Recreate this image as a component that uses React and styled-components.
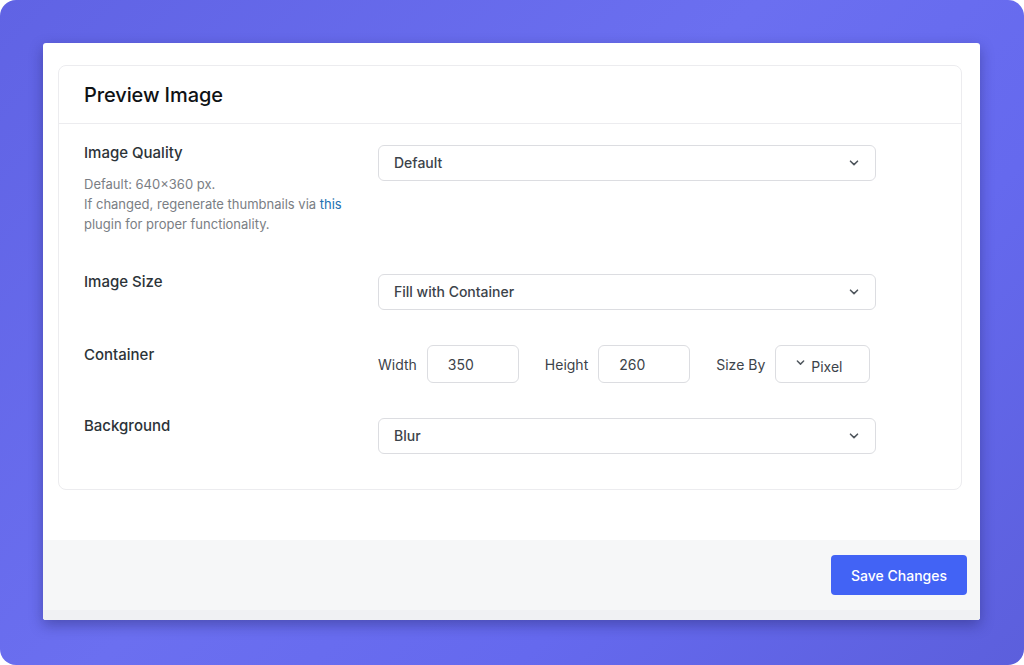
import React from 'react';
import styled, { createGlobalStyle } from 'styled-components';

const GlobalStyle = createGlobalStyle`
  html, body {
    margin: 0;
    padding: 0;
    background: #ffffff;
  }
  body {
    font-family: Inter, "Noto Sans", "Liberation Sans", sans-serif;
    -webkit-font-smoothing: antialiased;
  }
  * {
    box-sizing: border-box;
  }
`;

const Backdrop = styled.div`
  width: 1024px;
  height: 665px;
  padding: 43px 44px 45px 43px;
  border-radius: 16px;
  background: linear-gradient(135deg, #6063e4 0%, #6b6ff0 45%, #6569ee 70%, #5c5fdc 100%);
`;

const Window = styled.div`
  height: 577px;
  display: flex;
  flex-direction: column;
  background: #ffffff;
  border-radius: 3px;
  box-shadow: 0 5px 14px rgba(20, 20, 70, 0.35);
  overflow: hidden;
`;

const Body = styled.div`
  flex: 1;
  padding: 22px 18px 0 15px;
`;

const Card = styled.section`
  border: 1px solid #ececef;
  border-radius: 8px;
  background: #ffffff;
`;

const CardHeader = styled.header`
  height: 58px;
  display: flex;
  align-items: center;
  padding: 0 25px;
  border-bottom: 1px solid #ececef;
`;

const Title = styled.h2`
  margin: 0;
  font-size: 20px;
  font-weight: 500;
  color: #0f1215;
  letter-spacing: -0.1px;
`;

const Rows = styled.div`
  display: flex;
  flex-direction: column;
  gap: 35px;
  padding: 21px 25px 35px;
`;

const Row = styled.div`
  display: grid;
  grid-template-columns: 294px 498px;
  align-items: start;
`;

const LabelCol = styled.div`
  display: flex;
  flex-direction: column;
`;

const Label = styled.div`
  margin-top: ${(p) => (p.$offset !== undefined ? p.$offset : -2)}px;
  font-size: 15px;
  line-height: 20px;
  font-weight: 500;
  color: #2c3338;
`;

const Hint = styled.p`
  margin: 11px 0 5px;
  font-size: 13px;
  line-height: 20px;
  color: #7a7e84;
`;

const Link = styled.a`
  color: #2271b1;
  text-decoration: none;
`;

const SelectBox = styled.div`
  height: 36px;
  width: 100%;
  display: flex;
  align-items: center;
  justify-content: space-between;
  padding: 0 16px 1px 15px;
  border: 1px solid #dcdde1;
  border-radius: 6px;
  font-size: 14px;
  font-weight: 500;
  color: #3c434a;
  background: #ffffff;
`;

const Chevron = ({ size = 10 }) => (
  <svg width={size} height={size * 0.6} viewBox="0 0 10 6" fill="none">
    <path d="M1.5 1.2 L5 4.6 L8.5 1.2" stroke="#50575e" strokeWidth="1.6" strokeLinecap="round" strokeLinejoin="round" />
  </svg>
);

const Select = ({ value }) => (
  <SelectBox>
    <span>{value}</span>
    <Chevron />
  </SelectBox>
);

const Inline = styled.div`
  display: flex;
  align-items: center;
  font-size: 14px;
  color: #3c434a;
`;

const FieldLabel = styled.span`
  margin-right: 10px;
`;

const NumberBox = styled.div`
  width: 92px;
  height: 38px;
  display: flex;
  align-items: center;
  padding-left: 20px;
  margin-right: 26px;
  border: 1px solid #dcdde1;
  border-radius: 6px;
  color: #3c434a;
`;

const UnitBox = styled.div`
  width: 95px;
  height: 38px;
  display: flex;
  align-items: center;
  gap: 6px;
  padding: 4px 0 0 20px;
  border: 1px solid #dcdde1;
  border-radius: 6px;
  color: #3c434a;

  svg {
    margin-top: -6px;
  }
`;

const Footer = styled.footer`
  height: 80px;
  display: flex;
  flex-direction: column;
  background: #f6f7f8;
`;

const FooterBar = styled.div`
  flex: 1;
  display: flex;
  justify-content: flex-end;
  align-items: flex-start;
  padding: 15px 13px 0;
`;

const FooterEdge = styled.div`
  height: 10px;
  background: #f0f1f3;
`;

const SaveButton = styled.button`
  width: 136px;
  height: 40px;
  border: none;
  border-radius: 4px;
  background: #4263f5;
  color: #ffffff;
  font-family: inherit;
  font-size: 14px;
  font-weight: 500;
  cursor: pointer;
`;

export default function App() {
  return (
    <>
      <GlobalStyle />
      <Backdrop>
        <Window>
          <Body>
            <Card>
              <CardHeader>
                <Title>Preview Image</Title>
              </CardHeader>
              <Rows>
                <Row>
                  <LabelCol>
                    <Label>Image Quality</Label>
                    <Hint>
                      Default: 640×360 px.
                      <br />
                      If changed, regenerate thumbnails via <Link href="#">this</Link>
                      <br />
                      plugin for proper functionality.
                    </Hint>
                  </LabelCol>
                  <Select value="Default" />
                </Row>
                <Row>
                  <Label>Image Size</Label>
                  <Select value="Fill with Container" />
                </Row>
                <Row>
                  <Label $offset={0}>Container</Label>
                  <Inline>
                    <FieldLabel>Width</FieldLabel>
                    <NumberBox>350</NumberBox>
                    <FieldLabel>Height</FieldLabel>
                    <NumberBox>260</NumberBox>
                    <FieldLabel>Size By</FieldLabel>
                    <UnitBox>
                      <Chevron size={9} />
                      <span>Pixel</span>
                    </UnitBox>
                  </Inline>
                </Row>
                <Row>
                  <Label>Background</Label>
                  <Select value="Blur" />
                </Row>
              </Rows>
            </Card>
          </Body>
          <Footer>
            <FooterBar>
              <SaveButton>Save Changes</SaveButton>
            </FooterBar>
            <FooterEdge />
          </Footer>
        </Window>
      </Backdrop>
    </>
  );
}
